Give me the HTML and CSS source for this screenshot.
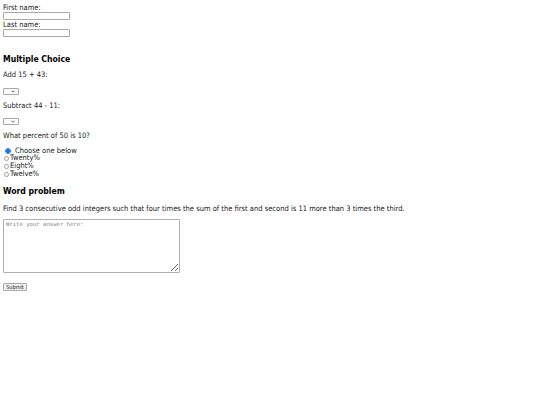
FILE: index.html
```html
<!DOCTYPE html>
<html>
<head>
<meta charset="utf-8">
<link rel="stylesheet" href="styles.css">
</head>
<body>
<form class="quiz">
  <label class="label">First name:</label>
  <input class="text-input" type="text">
  <label class="label">Last name:</label>
  <input class="text-input" type="text">

  <h3 class="heading heading-mc">Multiple Choice</h3>

  <p class="line q-add">Add 15 + 43:</p>
  <div class="select sel-1"><svg class="chev" width="4" height="3" viewBox="0 0 4 3"><path d="M0.5 0.7 L2 2.2 L3.5 0.7" fill="none" stroke="#333" stroke-width="0.8"/></svg></div>

  <p class="line q-sub">Subtract 44 - 11:</p>
  <div class="select sel-2"><svg class="chev" width="4" height="3" viewBox="0 0 4 3"><path d="M0.5 0.7 L2 2.2 L3.5 0.7" fill="none" stroke="#333" stroke-width="0.8"/></svg></div>

  <p class="line q-pct">What percent of 50 is 10?</p>
  <div class="radios">
    <div class="radio-row first-row"><span class="radio radio-checked"></span><span>Choose one below</span></div>
    <div class="radio-row"><span class="radio"></span><span>Twenty%</span></div>
    <div class="radio-row"><span class="radio"></span><span>Eight%</span></div>
    <div class="radio-row"><span class="radio"></span><span>Twelve%</span></div>
  </div>

  <h3 class="heading heading-wp">Word problem</h3>
  <p class="line q-find">Find 3 consecutive odd integers such that four times the sum of the first and second is 11 more than 3 times the third.</p>
  <textarea class="answer" placeholder="Write your answer here:"></textarea>
  <div class="actions"><button class="submit" type="button">Submit</button></div>
</form>
</body>
</html>
```

FILE: styles.css
```css
html { background: #ffffff; }
body {
  margin: 3px;
  font-family: "DejaVu Sans Condensed", "DejaVu Sans", sans-serif;
  font-size: 7.5px;
  line-height: 8px;
  color: #1a1a1a;
}
.quiz { display: flex; flex-direction: column; align-items: flex-start; }
.label { display: block; height: 9px; line-height: 9px; }
.text-input {
  display: block;
  box-sizing: border-box;
  width: 67px;
  height: 8px;
  margin: 0;
  padding: 0;
  border: 1px solid #a9a9a9;
  border-radius: 1px;
  background: #fff;
}
.heading {
  font-size: 8.6px;
  line-height: 10px;
  height: 10px;
  font-weight: bold;
  margin: 0;
  color: #000;
}
.heading-mc { margin-top: 17px; }
.heading-wp { margin-top: 8px; }
.line { margin: 0; height: 8px; white-space: nowrap; }
.q-add { margin-top: 7px; }
.q-sub { margin-top: 7px; }
.q-pct { margin-top: 7px; }
.q-find { margin-top: 9px; }
.select {
  box-sizing: border-box;
  width: 16px;
  height: 7px;
  border: 1px solid #a9a9a9;
  border-radius: 1px;
  display: flex;
  align-items: center;
  justify-content: flex-end;
  padding-right: 3px;
  background: #fff;
}
.sel-1 { margin-top: 9px; }
.sel-2 { margin-top: 8px; }
.chev { display: block; }
.radios { display: flex; flex-direction: column; margin-top: 7px; }
.radio-row { display: flex; align-items: center; height: 8px; line-height: 8px; }
.first-row { height: 7px; }
.radio {
  box-sizing: border-box;
  width: 5px;
  height: 5px;
  border: 0.7px solid #a0a0a0;
  border-radius: 50%;
  margin-left: 1px;
  margin-right: 1px;
  background: #fff;
}
.radio-checked {
  width: 6px;
  height: 6px;
  margin-left: 2px;
  margin-right: 4px;
  border: 1px solid #1a73e8;
  background: radial-gradient(circle, #1a73e8 0 1.6px, #ffffff 1.8px);
}
.answer {
  display: block;
  box-sizing: border-box;
  width: 177px;
  height: 54px;
  margin: 6px 0 0;
  padding: 1px 2px;
  border: 1px solid #b0b0b0;
  border-radius: 1px;
  font-family: "DejaVu Sans Mono", "Liberation Mono", monospace;
  font-size: 5.6px;
  line-height: 6px;
  resize: vertical;
}
.answer::placeholder { color: #8a8a8a; }
.actions { margin-top: 10px; }
.submit {
  display: block;
  box-sizing: border-box;
  width: 24px;
  height: 8px;
  padding: 0;
  margin: 0;
  border: 1px solid #a9a9a9;
  border-radius: 1px;
  background: #f0f0f0;
  font-family: "DejaVu Sans Condensed", "DejaVu Sans", sans-serif;
  font-size: 5.5px;
  line-height: 6px;
  color: #222;
}
```
